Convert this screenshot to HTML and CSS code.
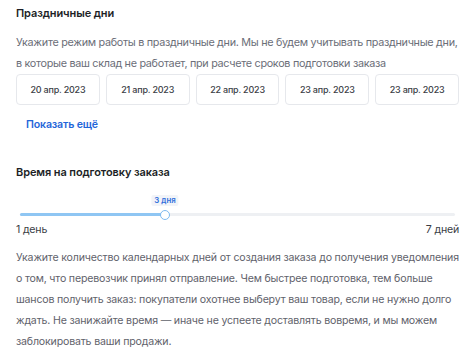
FILE: index.html
```html
<!DOCTYPE html>
<html lang="ru">
<head>
  <meta charset="UTF-8" />
  <meta name="viewport" content="width=device-width, initial-scale=1.0"/>
  <title>Настройки склада</title>
  <link rel="stylesheet" href="styles.css">
</head>
<body>
  <section class="block">
    <h2>Праздничные дни</h2>
    <p class="hint">Укажите режим работы в праздничные дни. Мы не будем учитывать праздничные дни, в которые ваш склад не работает, при расчете сроков подготовки заказа</p>
    <div class="dates">
      <button>20 апр. 2023</button>
      <button>21 апр. 2023</button>
      <button>22 апр. 2023</button>
      <button>23 апр. 2023</button>
      <button>23 апр. 2023</button>
    </div>
    <a href="#" class="more">Показать ещё</a>
  </section>

  <section class="block prep">
    <h2>Время на подготовку заказа</h2>
    <div class="slider">
      <div class="track">
        <div class="fill" style="width: 33.333%"></div>
        <div class="thumb" style="left: 33.333%">
          <span class="badge">3 дня</span>
        </div>
      </div>
    </div>
    <div class="range">
      <span>1 день</span>
      <span>7 дней</span>
    </div>
    <p class="text">Укажите количество календарных дней от создания заказа до получения уведомления о том, что перевозчик принял отправление. Чем быстрее подготовка, тем больше шансов получить заказ: покупатели охотнее выберут ваш товар, если не нужно долго ждать. Не занижайте время — иначе не успеете доставлять вовремя, и мы можем заблокировать ваши продажи.</p>
  </section>
</body>
</html>
```

FILE: styles.css
```css
* {
  box-sizing: border-box;
  margin: 0;
  padding: 0;
  font-family: 'Inter', 'Noto Sans', sans-serif;
}

body {
  background: #fff;
  color: #1f2229;
  padding: 5px 15px 0 16px;
}

.block h2 {
  font-size: 11px;
  font-weight: 600;
  line-height: 16px;
  letter-spacing: -0.1px;
  color: #1c1f26;
}

.hint {
  margin-top: 11px;
  font-size: 10.8px;
  line-height: 21px;
  letter-spacing: -0.3px;
  color: #6b6e78;
}

.dates {
  display: flex;
  gap: 6px;
}

.dates button {
  flex: 1;
  height: 31px;
  background: #fff;
  border: 1px solid #e6e8ec;
  border-radius: 4px;
  font-size: 9px;
  font-weight: 500;
  letter-spacing: -0.2px;
  color: #3a3d45;
}

.more {
  display: inline-block;
  margin: 13px 0 0 10px;
  font-size: 10.6px;
  font-weight: 600;
  line-height: 14px;
  letter-spacing: -0.15px;
  color: #1f66d9;
  text-decoration: none;
}

.prep {
  margin-top: 32px;
}

.slider {
  margin: 33px 4px 0;
}

.track {
  position: relative;
  height: 3px;
  border-radius: 2px;
  background: #eef0f3;
}

.fill {
  height: 100%;
  border-radius: 2px;
  background: #8fc6f3;
}

.thumb {
  position: absolute;
  top: 50%;
  width: 10px;
  height: 10px;
  margin: -5px 0 0 -5px;
  border: 1.5px solid #7fbaf0;
  border-radius: 50%;
  background: #fff;
}

.badge {
  position: absolute;
  bottom: 13px;
  left: 50%;
  transform: translateX(-50%);
  padding: 0 3px;
  font-size: 7.8px;
  font-weight: 600;
  line-height: 11px;
  white-space: nowrap;
  color: #2f6fdc;
  background: #f2f4f8;
  border-radius: 2px;
}

.range {
  display: flex;
  justify-content: space-between;
  margin-top: 7px;
  font-size: 10.6px;
  line-height: 14px;
  letter-spacing: -0.2px;
  color: #3a3d45;
}

.text {
  margin-top: 10px;
  font-size: 10.6px;
  line-height: 21px;
  letter-spacing: -0.18px;
  color: #5f626b;
}
```
